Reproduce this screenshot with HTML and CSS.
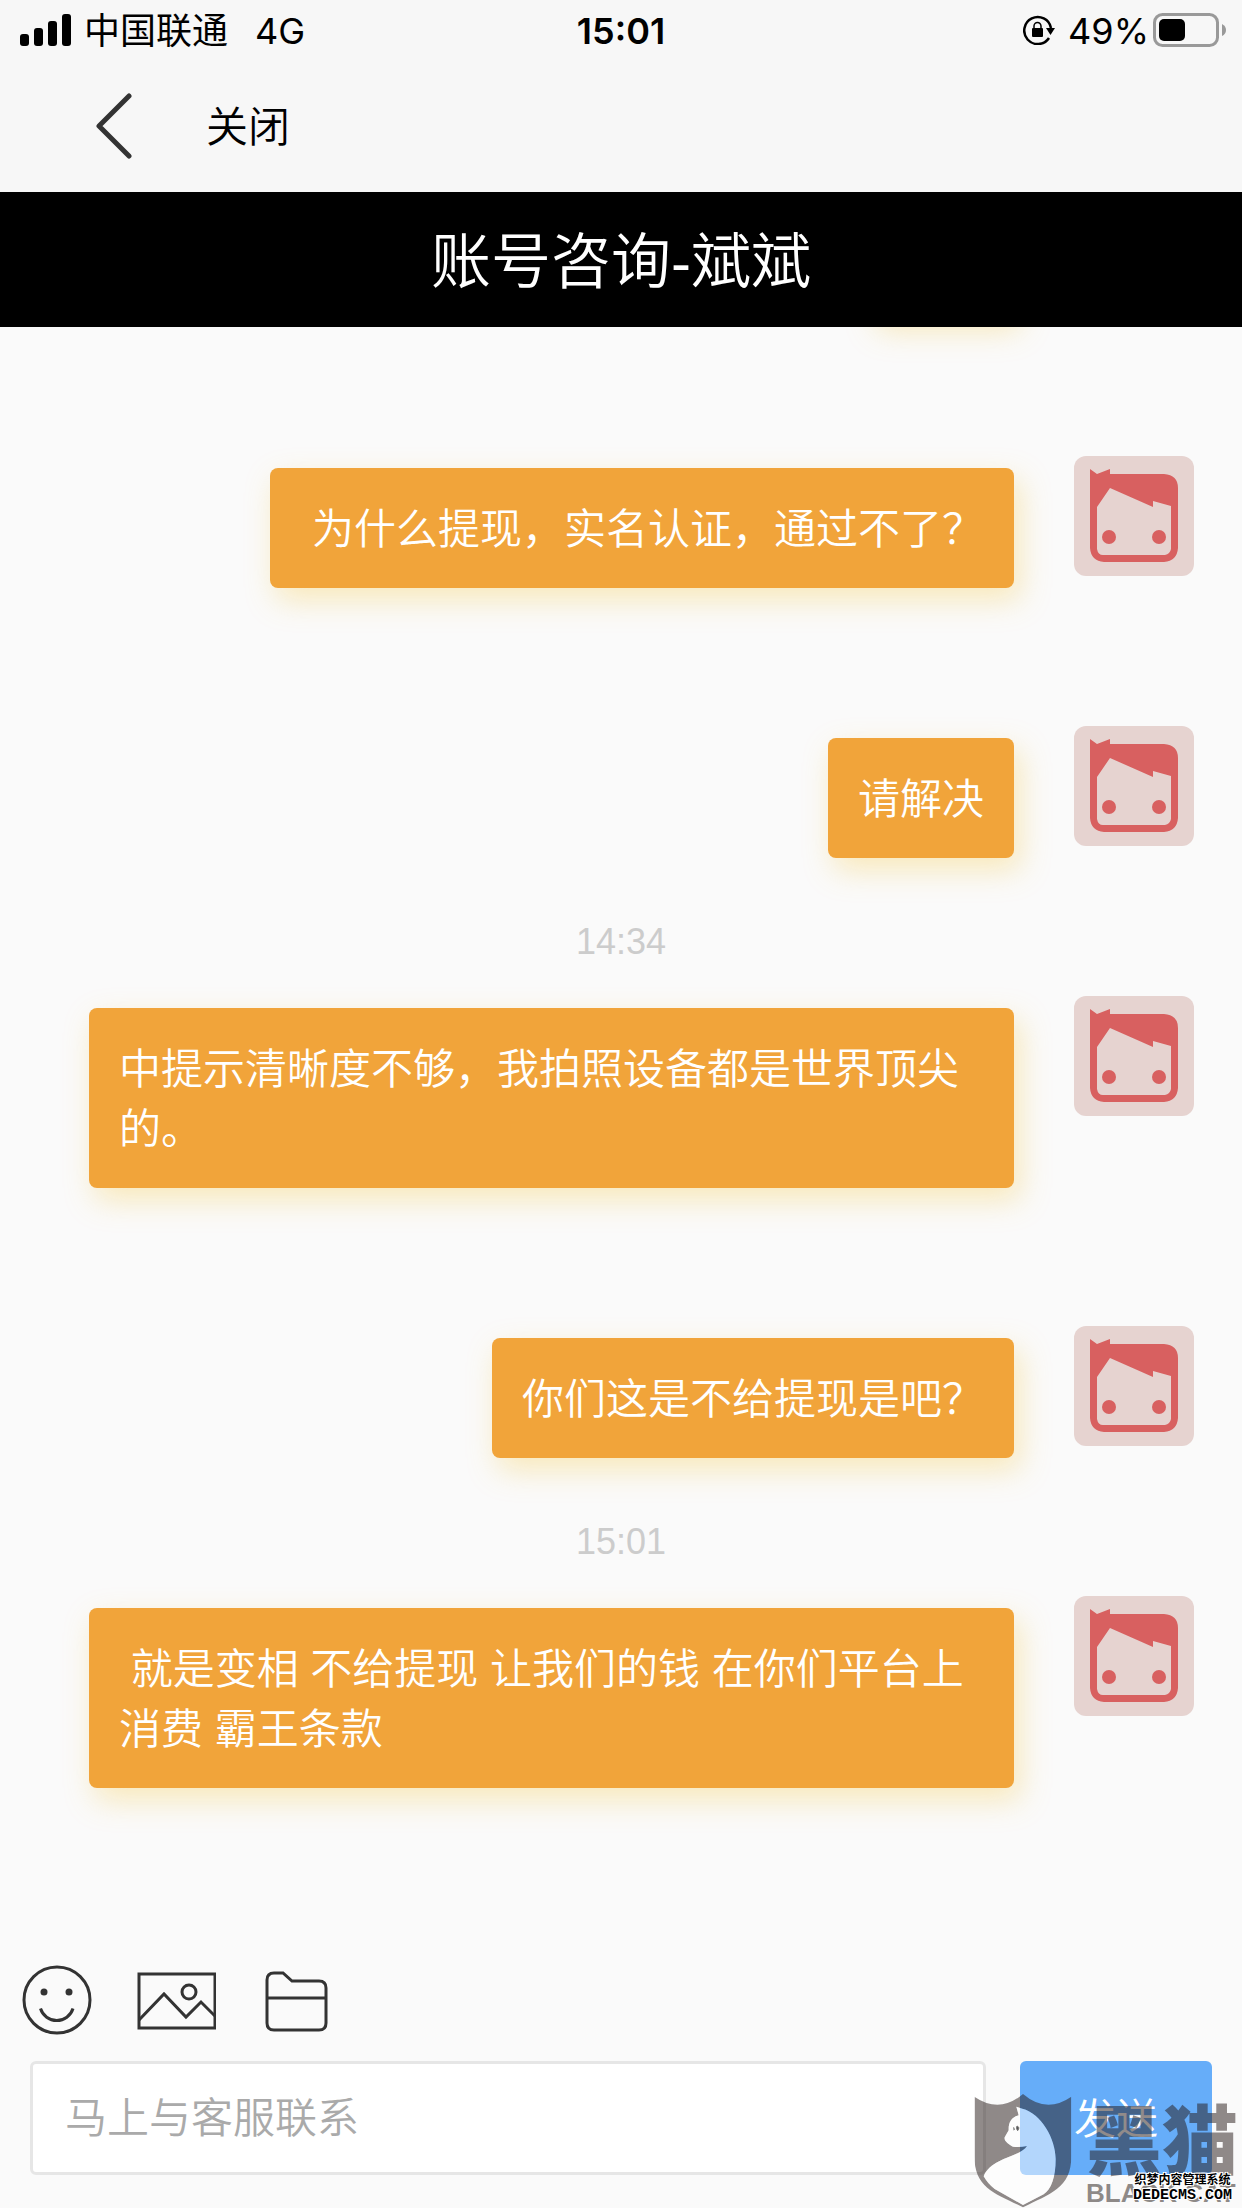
FILE: index.html
```
<!doctype html>
<html lang="zh-CN">

	<head>
		<title>账号咨询-斌斌</title>
		<meta charset="utf-8" />
		<meta name="viewport" content="width=device-width" />
		<link rel="stylesheet" href="styles.css">
	</head>

	<body>

		<!-- 头像，下面每条消息复用 -->
		<svg class="defs">
			<symbol id="face" viewBox="0 0 120 120">
				<path d="M16 13L23 18L36 13V18H90Q104 19 104 32V92Q103 105 90 106H30Q17 105 16 92ZM36 32L23 51V93Q24 99 29 99H91Q96 98 97 93V50L79 45V51Z" fill="#d86060" fill-rule="evenodd" />
				<circle cx="35" cy="81" r="7" fill="#d86060" />
				<circle cx="85" cy="81" r="7" fill="#d86060" />
			</symbol>
		</svg>

		<div class="page">
			<div class="status">
				<div class="status-side">
					<svg class="signal" width="51" height="32" viewBox="0 0 51 32">
						<rect x="0" y="20" width="9" height="12" rx="3" />
						<rect x="14" y="14" width="9" height="18" rx="3" />
						<rect x="28" y="7" width="9" height="25" rx="3" />
						<rect x="42" y="0" width="9" height="32" rx="3" />
					</svg>
					<span class="carrier">中国联通</span>
					<span>4G</span>
				</div>
				<span class="clock">15:01</span>
				<div class="status-side right">
					<svg class="lock" width="33" height="30" viewBox="0 0 33 30">
						<path d="M26 23A13.500 13.500 0 1 1 28 13" fill="none" stroke="#000" stroke-width="2.500" />
						<path d="M23 13H32L27.500 20Z" />
						<rect x="9" y="13" width="11" height="9" rx="1" />
						<path d="M11 14V11A3.500 3.500 0 0 1 18 11V14" fill="none" stroke="#000" stroke-width="1.500" />
					</svg>
					<span>49%</span>
					<svg class="battery" width="74" height="34" viewBox="0 0 74 34">
						<rect x="1.500" y="1.500" width="63" height="31" rx="8" fill="none" stroke="#999" stroke-width="3" />
						<rect x="6" y="6" width="26" height="22" rx="5" />
						<path d="M69 11Q73 13 73 17T69 23Z" fill="#999" />
					</svg>
				</div>
			</div>

			<div class="nav">
				<button class="back" type="button" aria-label="返回">
					<svg width="36" height="66" viewBox="0 0 36 66">
						<path d="M33 3L3 33L33 63" fill="none" stroke="#333" stroke-width="5" stroke-linecap="round" stroke-linejoin="round" />
					</svg>
				</button>
				<button class="close" type="button">关闭</button>
			</div>

			<h1 class="title">账号咨询-斌斌</h1>

			<div class="chat">
				<!-- 已滚出顶部的一条 -->
				<div class="msg passed">
					<div class="bubble"></div>
				</div>
				<div class="msg">
					<p class="bubble">&nbsp;为什么提现，实名认证，通过不了？</p>
					<svg class="avatar"><use href="#face" /></svg>
				</div>
				<div class="msg">
					<p class="bubble">请解决</p>
					<svg class="avatar"><use href="#face" /></svg>
				</div>
				<div class="time">14:34</div>
				<div class="msg">
					<p class="bubble">中提示清晰度不够，我拍照设备都是世界顶尖的。</p>
					<svg class="avatar"><use href="#face" /></svg>
				</div>
				<div class="msg">
					<p class="bubble">你们这是不给提现是吧？</p>
					<svg class="avatar"><use href="#face" /></svg>
				</div>
				<div class="time">15:01</div>
				<div class="msg">
					<p class="bubble">&nbsp;就是变相 不给提现 让我们的钱 在你们平台上消费 霸王条款</p>
					<svg class="avatar"><use href="#face" /></svg>
				</div>
			</div>

			<div class="footer">
				<div class="tools">
					<button type="button" aria-label="表情">
						<svg width="70" height="70" viewBox="0 0 70 70">
							<circle cx="35" cy="35" r="33" />
							<circle class="dot" cx="22" cy="27" r="3.500" />
							<circle class="dot" cx="47" cy="27" r="3.500" />
							<path d="M18.500 43.500A17 17 0 0 0 51 43.500" />
						</svg>
					</button>
					<button type="button" aria-label="图片">
						<svg width="80" height="70" viewBox="0 0 80 70">
							<rect x="3" y="9" width="76" height="54" />
							<path d="M3 55L28 29L50 52L65 37L79 51" />
							<circle cx="53" cy="27" r="7" />
						</svg>
					</button>
					<button type="button" aria-label="文件">
						<svg width="70" height="70" viewBox="-5 0 70 70">
							<path d="M9 8H18L27 16H54Q61 16 61 23V58Q61 65 54 65H9Q2 65 2 58V15Q2 8 9 8ZM2 33H61" />
						</svg>
					</button>
				</div>
				<form class="send-bar">
					<input class="text" type="text" placeholder="马上与客服联系" aria-label="马上与客服联系" />
					<button class="send" type="button">发送</button>
				</form>

				<!-- 水印 -->
				<div class="mark">
					<svg width="98" height="114" viewBox="34 40 292 342">
						<defs>
							<path id="cat" d="M160 78L178 84C235 98 278 175 278 235C278 290 265 325 242 341L180 373L95 325Q75 310 62 287C85 230 175 228 192 196Q170 200 150 198C138 192 122 180 125 170L137 149C136 125 145 110 167 104Z" />
							<mask id="cat-cut" maskUnits="userSpaceOnUse" x="34" y="40" width="292" height="342">
								<rect x="34" y="40" width="292" height="342" fill="#fff" />
								<use href="#cat" fill="#000" />
							</mask>
						</defs>
						<path d="M34 48Q110 100 180 40Q250 100 325 48V225C325 325 260 338 180 380C100 338 34 325 34 225Z" fill="#231815" fill-opacity=".5" mask="url(#cat-cut)" />
						<use href="#cat" fill="#fff" fill-opacity=".5" />
						<path d="M152 140Q156 150 152 148M162 136Q172 140 164 150Q158 144 162 136Z" fill="#555" stroke="#777" stroke-width="3" />
					</svg>
					<div class="mark-name">
						<span class="mark-cn">黑猫</span>
						<span class="mark-en">BLACK CAT</span>
					</div>
				</div>
				<div class="cms">
					<span class="cms-cn">织梦内容管理系统</span>
					<span class="cms-en">DEDECMS.COM</span>
				</div>
			</div>
		</div>

	</body>

</html>
```

FILE: styles.css
```
* {
	box-sizing: border-box;
}

body {
	margin: 0;
	background: #fafafa;
	font-family: "Liberation Sans", "Noto Sans CJK SC", sans-serif;
	font-weight: 350;
}

button {
	padding: 0;
	border: none;
	background: none;
	font: inherit;
}

svg {
	display: block;
}

.defs {
	position: absolute;
	width: 0;
	height: 0;
}

.page {
	display: flex;
	flex-direction: column;
	min-height: 100vh;
}

.status {
	display: flex;
	align-items: center;
	height: 60px;
	padding: 0 16px;
	background: #f7f7f7;
	font: 36px/60px Inter, "Noto Sans CJK SC", sans-serif;
}

.status span {
	padding-top: 2px;
}

.status-side {
	display: flex;
	flex: 1;
	align-items: center;
}

.right {
	justify-content: flex-end;
}

.signal {
	margin-left: 4px;
}

.status .clock {
	font-weight: 600;
}

.carrier {
	margin: 0 27px 0 13px;
}

.lock {
	margin-right: 12px;
}

.battery {
	margin: 0 -1px 0 4px;
}

.nav {
	display: flex;
	align-items: center;
	height: 132px;
	padding-left: 96px;
	background: #f7f7f7;
}

.close {
	margin-left: 74px;
	padding-bottom: 6px;
	color: #000;
	font-size: 42px;
}

.title {
	margin: 0;
	padding-top: 7px;
	background: #000;
	color: #fff;
	font-size: 60px;
	font-weight: 350;
	line-height: 128px;
	text-align: center;
}

.chat {
	flex: 1;
	overflow: hidden;
}

.msg {
	display: flex;
	justify-content: flex-end;
	align-items: flex-start;
	margin-bottom: 138px;
	padding: 0 48px 0 89px;
}

.bubble {
	margin: 12px 0 0;
	padding: 32px 30px 28px;
	border-radius: 8px;
	background: #f1a43a;
	box-shadow: 6px 12px 30px rgba(245, 200, 70, 0.35);
	color: #fff;
	font-size: 42px;
	line-height: 60px;
}

.avatar {
	flex: none;
	width: 120px;
	height: 120px;
	margin-left: 60px;
	border-radius: 12px;
	background: #e6d3d0;
}

.passed {
	margin-top: -141px;
	padding-right: 228px;
}

.passed .bubble {
	width: 144px;
	height: 120px;
}

.time {
	margin: -84px 0 24px;
	color: #ccc;
	font-size: 36px;
	line-height: 60px;
	text-align: center;
}

.footer {
	position: relative;
	padding: 0 30px 33px;
}

.tools {
	display: flex;
	gap: 44px;
	margin: 0 0 26px -8px;
}

.tools svg {
	fill: none;
	stroke: #333;
	stroke-width: 3;
}

.tools .dot {
	fill: #333;
	stroke: none;
}

.send-bar {
	display: flex;
	gap: 34px;
}

.text {
	flex: 1;
	min-width: 0;
	height: 114px;
	padding: 2px 32px 0;
	border: 3px solid #e6e6e6;
	border-radius: 6px;
	background: #fff;
	font: inherit;
	font-size: 42px;
}

.text::placeholder {
	color: #aaa;
}

.send {
	width: 192px;
	height: 114px;
	padding-bottom: 6px;
	border-radius: 6px;
	background: #66adf9;
	color: #fff;
	font-size: 42px;
}

/* 水印盖在发送按钮上面 */
.mark {
	position: absolute;
	right: 4px;
	bottom: 0;
	display: flex;
	align-items: flex-end;
	gap: 14px;
	pointer-events: none;
}

.mark-name {
	color: rgba(35, 24, 21, 0.5);
	white-space: nowrap;
}

.mark-name span {
	display: block;
}

.mark-cn {
	font: 900 76px/84px "Noto Sans CJK SC", sans-serif;
}

.mark-en {
	font-size: 26px;
	font-weight: 700;
	line-height: 30px;
}

.cms {
	position: absolute;
	right: 10px;
	bottom: 5px;
	color: #000;
	text-align: center;
	text-shadow: 1px 1px #fff, -1px -1px #fff, 1px -1px #fff, -1px 1px #fff;
	white-space: nowrap;
	pointer-events: none;
}

.cms span {
	display: block;
}

.cms-cn {
	font-size: 12px;
	font-weight: 700;
	line-height: 16px;
}

.cms-en {
	font: 700 15px/15px "Liberation Mono", monospace;
}
```
